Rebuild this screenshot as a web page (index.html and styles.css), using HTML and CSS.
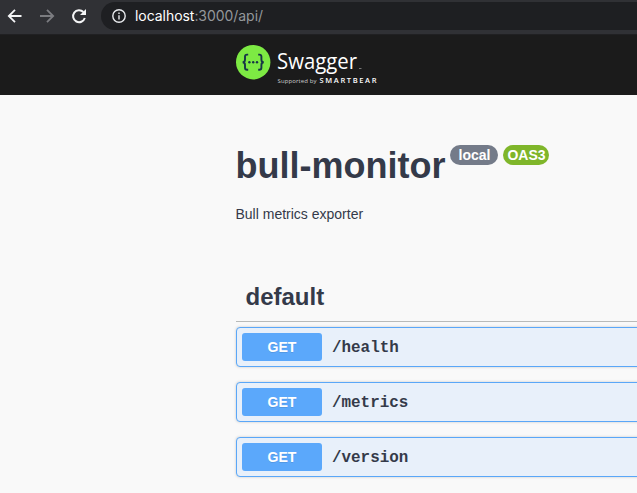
FILE: index.html
```html
<!DOCTYPE html>
<html lang="en">
<head>
<meta charset="utf-8">
<title>Swagger UI</title>
<link rel="stylesheet" href="styles.css">
</head>
<body>
<div class="browser-bar">
  <svg class="nav-icons" width="96" height="34" viewBox="0 0 96 34" fill="none" stroke-width="1.8">
    <path d="M21.500 16H9M15 9.800L8.800 16l6.200 6.200" stroke="#f4f5f6"/>
    <path d="M40 16h12.500M47 9.800l6.200 6.200-6.200 6.200" stroke="#7b7c80"/>
    <path d="M83.400 12A6 6 0 1 0 84.800 18" stroke="#f4f5f6" stroke-width="2"/>
    <path d="M86 9v6h-6z" fill="#f4f5f6"/>
  </svg>
  <div class="address">
    <svg width="14" height="14" viewBox="0 0 14 14" fill="none" stroke="#e8eaed" stroke-width="1.400">
      <circle cx="7" cy="7" r="6.200"/>
      <path d="M7 6.200v4.200M7 3.500v1.500"/>
    </svg>
    <span class="url"><span class="host">localhost</span>:3000/api/</span>
  </div>
</div>
<header class="topbar">
  <svg class="logo" width="150" height="44" viewBox="0 0 150 44">
    <circle cx="17.200" cy="18.200" r="17.200" fill="#7dea43"/>
    <g fill="none" stroke="#173647" stroke-width="1.900">
      <path d="M12.200 10.600h-1.200q-2 0-2 2v2.800q0 2.800-2.400 2.800q2.400 0 2.400 2.800v2.800q0 2 2 2h1.200"/>
      <path d="M22.200 10.600h1.200q2 0 2 2v2.800q0 2.800 2.400 2.800q-2.400 0-2.400 2.800v2.800q0 2-2 2h-1.200"/>
    </g>
    <g fill="#173647"><circle cx="13.400" cy="18.200" r="1.200"/><circle cx="17.200" cy="18.200" r="1.200"/><circle cx="21" cy="18.200" r="1.200"/></g>
    <text class="wordmark" x="41" y="24.500" textLength="80" lengthAdjust="spacingAndGlyphs">Swagger</text>
    <path d="M123 24.500h2.500" stroke="#777"/>
    <text class="supported" x="41.500" y="38.500" textLength="39">Supported by</text>
    <text class="smartbear" x="83.500" y="38.500" textLength="57">SMARTBEAR</text>
  </svg>
</header>
<main class="content">
  <div class="title-row">
    <h1>bull-monitor</h1>
    <span class="badge badge-version">local</span>
    <span class="badge badge-oas">OAS3</span>
  </div>
  <p class="description">Bull metrics exporter</p>
  <h2>default</h2>
  <div class="operations">
    <div class="operation"><span class="method">GET</span><span class="path">/health</span></div>
    <div class="operation"><span class="method">GET</span><span class="path">/metrics</span></div>
    <div class="operation"><span class="method">GET</span><span class="path">/version</span></div>
  </div>
</main>
</body>
</html>
```
FILE: styles.css
```css
* { box-sizing: border-box; }
body {
  margin: 0;
  height: 493px;
  overflow: hidden;
  background: #f9f9f9;
  color: #343a49;
  font-family: "Liberation Sans", Arial, sans-serif;
}
svg { display: block; flex: none; }
.browser-bar {
  display: flex;
  height: 35px;
  background: #303135;
  border-bottom: 1px solid #202022;
}
.address {
  display: flex;
  align-items: center;
  gap: 9px;
  flex: 1;
  height: 28px;
  margin: 2px 0 0 5px;
  padding-left: 11px;
  background: #1e1f22;
  border-radius: 14px 0 0 14px;
}
.url {
  color: #94979b;
  font: 14px/28px Inter, sans-serif;
  letter-spacing: -0.050px;
}
.host { color: #fff; }
.topbar {
  height: 60px;
  padding: 9px 0 0 236px;
  background: #1b1b1b;
}
.wordmark { font: 400 21.500px "Open Sans", sans-serif; fill: #fff; }
.supported { font: 6px "Open Sans", sans-serif; fill: #ccc; }
.smartbear { font: 600 7.500px "Open Sans", sans-serif; fill: #fff; }
.content { padding: 50px 0 0 235.500px; }
.title-row {
  display: flex;
  align-items: flex-start;
  height: 42px;
}
h1 {
  margin: 0;
  font-size: 36px;
  line-height: 42px;
}
.badge {
  height: 20px;
  border-radius: 10px;
  color: #fff;
  font-size: 14px;
  font-weight: 700;
  line-height: 20px;
  text-align: center;
}
.badge-version { width: 48px; margin-left: 5px; background: #747b89; }
.badge-oas { width: 46px; margin-left: 5px; background: #7fb62a; }
.description {
  margin: 19px 0 0;
  font-size: 14px;
  line-height: 16px;
}
h2 {
  height: 50px;
  margin: 50px 0 0;
  padding: 10px 0 0 10px;
  border-bottom: 1px solid #b8bab9;
  font-size: 24px;
  line-height: 30px;
}
.operations {
  display: flex;
  flex-direction: column;
  gap: 15px;
  margin: 5px -10px 0 0.500px;
}
.operation {
  display: flex;
  align-items: center;
  gap: 10px;
  height: 40px;
  padding: 0 5px;
  background: #e8f0fa;
  border: 1px solid #5aa7f8;
  border-radius: 4px;
  box-shadow: 0 0 3px rgba(0, 0, 0, 0.190);
}
.method {
  width: 80px;
  height: 28px;
  border-radius: 3px;
  background: #5ba8fb;
  color: #fff;
  font-size: 14px;
  font-weight: 700;
  line-height: 29px;
  text-align: center;
  text-shadow: 0 1px 0 rgba(0, 0, 0, 0.100);
}
.path {
  padding-top: 1px;
  font: 700 15.900px/18px "Liberation Mono", monospace;
}
```
